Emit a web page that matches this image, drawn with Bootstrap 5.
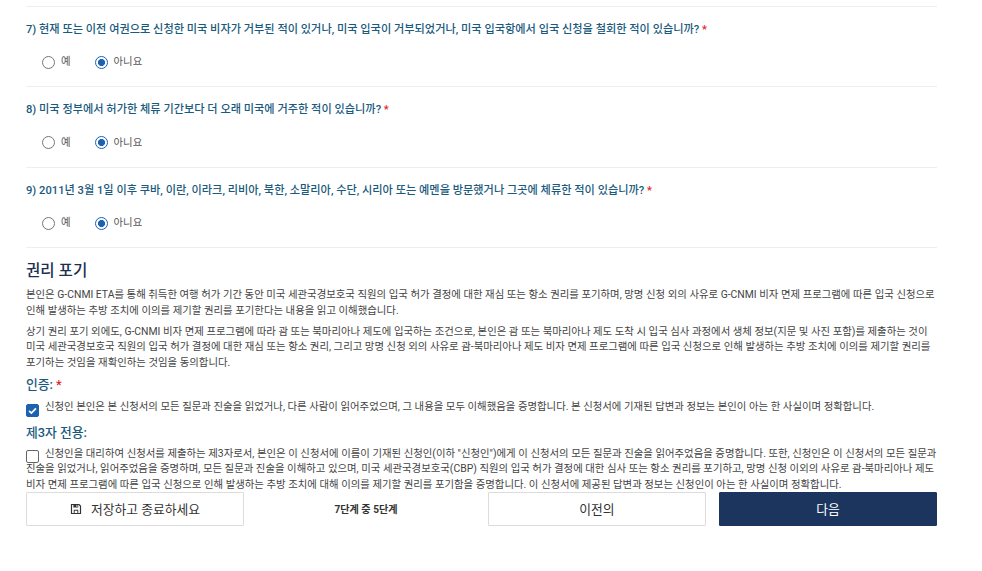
<!DOCTYPE html>
<html lang="ko"><head><meta charset="utf-8"><title>G-CNMI</title>
<link rel="stylesheet" href="https://cdn.jsdelivr.net/npm/bootstrap@5.3.0/dist/css/bootstrap.min.css">
<style>
html,body{height:571px;overflow:hidden;background:#fff}
body{font-family:Roboto,"Noto Sans CJK KR",sans-serif;color:#444;font-size:10px;word-break:keep-all}
.page-wrap{padding:5.6px 45px 0 26px}
.q-block{border-top:1px solid #eee;height:80.5px;padding-top:15px}
.q-title{font-size:11.2px;font-weight:500;color:#1a5a7d;line-height:15px;margin:0}
.req{color:#e01f26}
.opts{padding:18.5px 0 0 16px;gap:24px}
.opt{gap:6px;font-size:10.4px;color:#555;line-height:14px;margin:0}
.fake-radio{appearance:none;width:13px;height:13px;border:1.5px solid #757575;border-radius:50%;margin:0;background:#fff;flex:none}
.fake-radio:checked{border-color:#1c62b0;background:radial-gradient(circle,#1c62b0 0 3.3px,#fff 3.8px)}
.waive{border-top:1px solid #eee;padding-top:14px}
.w-head{font-size:15.6px;font-weight:500;color:#1c2f4f;line-height:19px;margin:0 0 6px}
.w-text{font-size:10.4px;line-height:15.5px;color:#444;margin:0 0 5.5px}
.sub-head{font-size:12.8px;font-weight:500;color:#1a5a7d;line-height:17px;margin:6px 0 6px}
.sub-head-b{margin:9px 0 5px}
.chk-text{font-size:10.4px;line-height:15.5px;color:#444;margin:0}
.chk-wrap{display:block;margin:0}
.fake-check{appearance:none;width:13px;height:13px;border:1.5px solid #666;border-radius:2px;background:#fff;margin:0 6px -3px 0;vertical-align:-3.5px}
.fake-check:checked{border-color:#1c62b0;background:#1c62b0 url("data:image/svg+xml,%3Csvg xmlns='http://www.w3.org/2000/svg' viewBox='0 0 16 16'%3E%3Cpath fill='none' stroke='%23fff' stroke-width='2.6' d='M3 8.5l3.4 3.2L13 5'/%3E%3C/svg%3E") center/100% no-repeat}
.act-btn{width:218px;height:34px;border:1px solid #dcdcdc;border-radius:1px;background:#fff;color:#333;font-size:12.8px;padding:0;display:flex;align-items:center;justify-content:center;gap:9px}
.act-next{background:#1c355e;border-color:#1c355e;color:#fff}
.act-step{width:244px;font-size:10.1px;font-weight:700;color:#333;display:flex;align-items:center;justify-content:center}
</style></head><body>
<main class="page-wrap">
<section class="q-block"><p class="q-title">7) 현재 또는 이전 여권으로 신청한 미국 비자가 거부된 적이 있거나, 미국 입국이 거부되었거나, 미국 입국항에서 입국 신청을 철회한 적이 있습니까? <span class="req">*</span></p>
<div class="d-flex opts"><label class="d-flex align-items-center opt"><input class="fake-radio" type="radio" name="q7">예</label><label class="d-flex align-items-center opt"><input class="fake-radio" type="radio" name="q7" checked>아니요</label></div></section>
<section class="q-block"><p class="q-title">8) 미국 정부에서 허가한 체류 기간보다 더 오래 미국에 거주한 적이 있습니까? <span class="req">*</span></p>
<div class="d-flex opts"><label class="d-flex align-items-center opt"><input class="fake-radio" type="radio" name="q8">예</label><label class="d-flex align-items-center opt"><input class="fake-radio" type="radio" name="q8" checked>아니요</label></div></section>
<section class="q-block"><p class="q-title">9) 2011년 3월 1일 이후 쿠바, 이란, 이라크, 리비아, 북한, 소말리아, 수단, 시리아 또는 예멘을 방문했거나 그곳에 체류한 적이 있습니까? <span class="req">*</span></p>
<div class="d-flex opts"><label class="d-flex align-items-center opt"><input class="fake-radio" type="radio" name="q9">예</label><label class="d-flex align-items-center opt"><input class="fake-radio" type="radio" name="q9" checked>아니요</label></div></section>
<section class="waive">
<h2 class="w-head">권리 포기</h2>
<p class="w-text">본인은 G-CNMI ETA를 통해 취득한 여행 허가 기간 동안 미국 세관국경보호국 직원의 입국 허가 결정에 대한 재심 또는 항소 권리를 포기하며, 망명 신청 외의 사유로 G-CNMI 비자 면제 프로그램에 따른 입국 신청으로 인해 발생하는 추방 조치에 이의를 제기할 권리를 포기한다는 내용을 읽고 이해했습니다.</p>
<p class="w-text">상기 권리 포기 외에도, G-CNMI 비자 면제 프로그램에 따라 괌 또는 북마리아나 제도에 입국하는 조건으로, 본인은 괌 또는 북마리아나 제도 도착 시 입국 심사 과정에서 생체 정보(지문 및 사진 포함)를 제출하는 것이 미국 세관국경보호국 직원의 입국 허가 결정에 대한 재심 또는 항소 권리, 그리고 망명 신청 외의 사유로 괌-북마리아나 제도 비자 면제 프로그램에 따른 입국 신청으로 인해 발생하는 추방 조치에 이의를 제기할 권리를 포기하는 것임을 재확인하는 것임을 동의합니다.</p>
<h3 class="sub-head">인증: <span class="req">*</span></h3>
<label class="chk-wrap chk-text"><input class="fake-check" type="checkbox" checked>신청인 본인은 본 신청서의 모든 질문과 진술을 읽었거나, 다른 사람이 읽어주었으며, 그 내용을 모두 이해했음을 증명합니다. 본 신청서에 기재된 답변과 정보는 본인이 아는 한 사실이며 정확합니다.</label>
<h3 class="sub-head sub-head-b">제3자 전용:</h3>
<label class="chk-wrap chk-text"><input class="fake-check" type="checkbox">신청인을 대리하여 신청서를 제출하는 제3자로서, 본인은 이 신청서에 이름이 기재된 신청인(이하 "신청인")에게 이 신청서의 모든 질문과 진술을 읽어주었음을 증명합니다. 또한, 신청인은 이 신청서의 모든 질문과 진술을 읽었거나, 읽어주었음을 증명하며, 모든 질문과 진술을 이해하고 있으며, 미국 세관국경보호국(CBP) 직원의 입국 허가 결정에 대한 심사 또는 항소 권리를 포기하고, 망명 신청 이외의 사유로 괌-북마리아나 제도 비자 면제 프로그램에 따른 입국 신청으로 인해 발생하는 추방 조치에 대해 이의를 제기할 권리를 포기함을 증명합니다. 이 신청서에 제공된 답변과 정보는 신청인이 아는 한 사실이며 정확합니다.</label>
</section>
<div class="d-flex">
<button class="btn act-btn" type="button"><svg width="12" height="12" viewBox="0 0 16 16" aria-hidden="true"><path fill="none" stroke="#333" stroke-width="1.6" d="M2 2h10l2 2v10H2z"/><path fill="#333" d="M4.5 2h6.5v4H4.5zM5 9h6v5H5z"/><path fill="#fff" d="M8.5 3h1.5v2H8.5zM6.2 10.2h3.6v3H6.2z"/></svg>저장하고 종료하세요</button>
<div class="act-step">7단계 중 5단계</div>
<button class="btn act-btn" type="button">이전의</button>
<button class="btn act-btn act-next ms-auto" type="button">다음</button>
</div>
</main>
<script src="https://cdn.jsdelivr.net/npm/bootstrap@5.3.0/dist/js/bootstrap.bundle.min.js"></script>
</body></html>
